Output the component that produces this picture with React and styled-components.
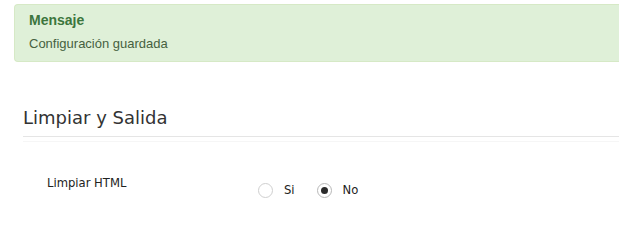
import React from "react";
import styled, { createGlobalStyle } from "styled-components";

const Global = createGlobalStyle`
  html, body { margin: 0; padding: 0; background: #fff; overflow: hidden; }
  body { font-family: "DejaVu Sans", Verdana, sans-serif; color: #333; }
`;

const Page = styled.div`
  width: 100%;
  padding: 4px 0 0 14px;
  box-sizing: border-box;
`;

const Alert = styled.div`
  background: #dff0d8;
  border: 1px solid #d6e9c6;
  border-right: 0;
  border-radius: 4px 0 0 4px;
  padding: 7px 14px 8px;
  font-family: "Liberation Sans", Arial, sans-serif;
  color: #3c763d;
`;

const AlertTitle = styled.div`
  font-weight: bold;
  font-size: 14px;
  line-height: 17px;
  margin-bottom: 6px;
`;

const AlertText = styled.div`
  font-size: 13px;
  line-height: 18px;
  color: #46613f;
`;

const Section = styled.section`
  margin: 46px 0 0 9px;
`;

const SectionTitle = styled.h2`
  margin: 0;
  font-weight: normal;
  font-size: 18px;
  line-height: 20px;
  padding-bottom: 8px;
  border-bottom: 1px solid #e5e5e5;
  color: #333;
`;

const TitleShade = styled.div`
  height: 1px;
  margin-top: 4px;
  background: #f6f6f6;
`;

const Row = styled.div`
  display: flex;
  align-items: flex-start;
  margin-top: 33px;
  padding-left: 24px;
`;

const Label = styled.div`
  width: 211px;
  font-size: 11.6px;
  line-height: 16px;
  color: #222;
`;

const RadioGroup = styled.div`
  display: flex;
  align-items: center;
  margin-top: 7px;
  gap: 22px;
`;

const Option = styled.label`
  display: flex;
  align-items: center;
  gap: 11px;
  font-size: 11.6px;
  line-height: 16px;
  color: #222;
`;

const Radio = styled.span`
  width: 13px;
  height: 13px;
  border-radius: 50%;
  border: 1px solid ${(p) => (p.$checked ? "#b8b8b8" : "#cfcfcf")};
  background: #fff;
  display: flex;
  align-items: center;
  justify-content: center;
  box-sizing: content-box;

  &::after {
    content: "";
    width: 7px;
    height: 7px;
    border-radius: 50%;
    background: ${(p) => (p.$checked ? "#2b2b2b" : "transparent")};
  }
`;

export default function App() {
  return (
    <>
      <Global />
      <Page>
        <Alert>
          <AlertTitle>Mensaje</AlertTitle>
          <AlertText>Configuración guardada</AlertText>
        </Alert>
        <Section>
          <SectionTitle>Limpiar y Salida</SectionTitle>
          <TitleShade />
          <Row>
            <Label>Limpiar HTML</Label>
            <RadioGroup>
              <Option>
                <Radio />
                Si
              </Option>
              <Option>
                <Radio $checked />
                No
              </Option>
            </RadioGroup>
          </Row>
        </Section>
      </Page>
    </>
  );
}
